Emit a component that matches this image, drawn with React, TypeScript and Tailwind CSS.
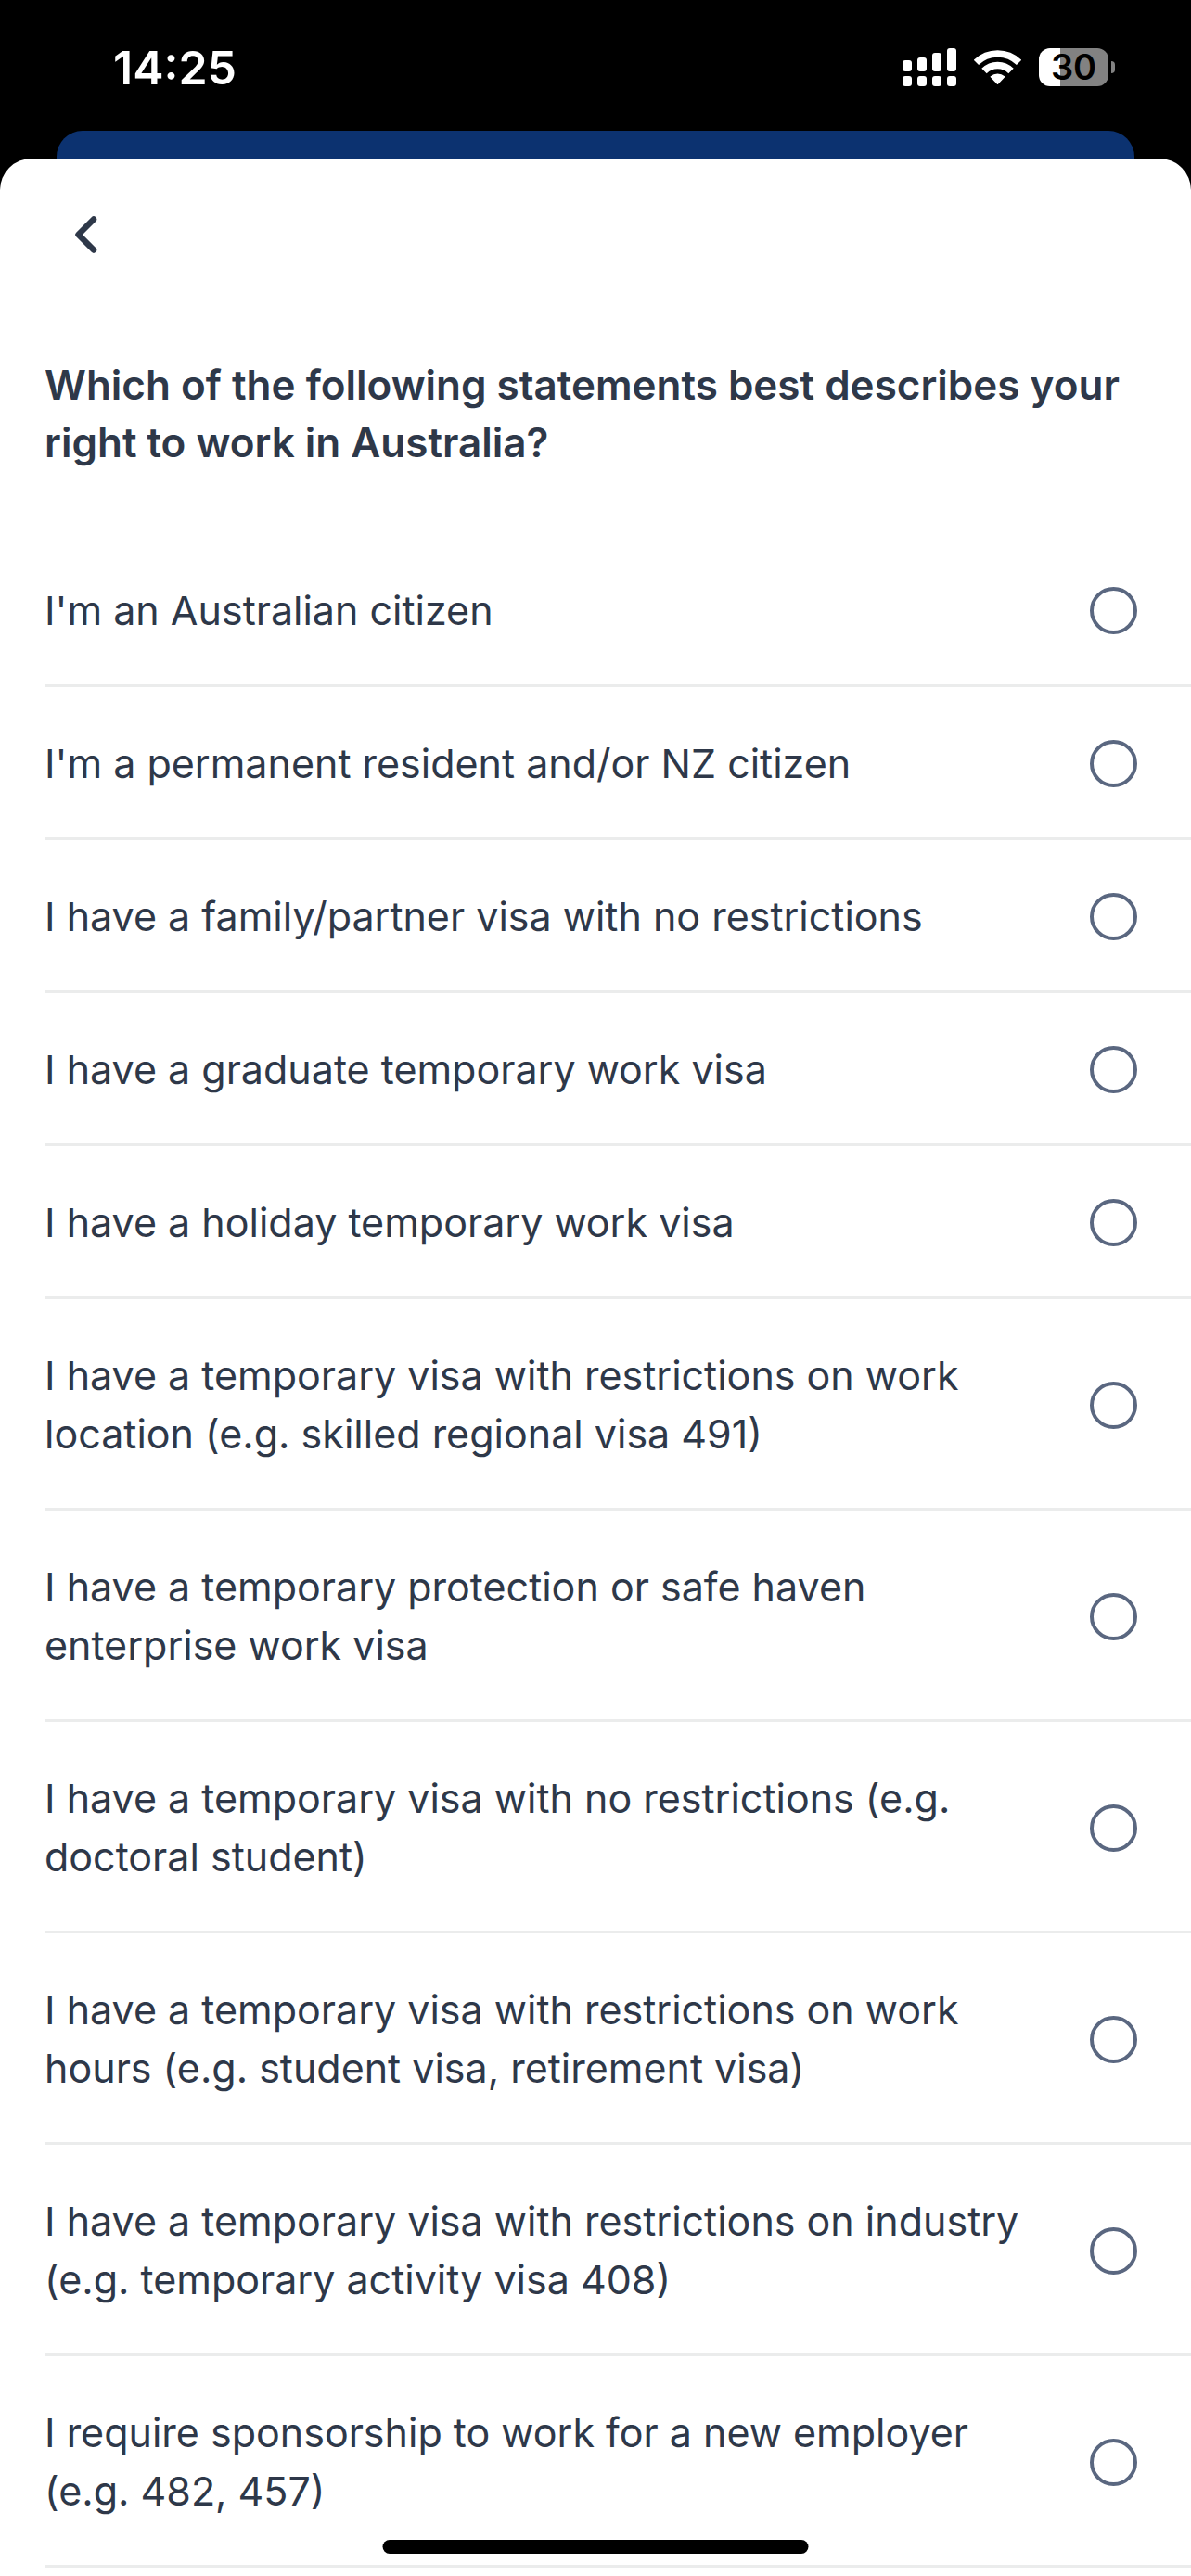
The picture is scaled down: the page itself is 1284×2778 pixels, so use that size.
import { useState } from 'react';

const options = [
  { id: 'citizen', label: "I'm an Australian citizen" },
  { id: 'permanent', label: "I'm a permanent resident and/or NZ citizen" },
  { id: 'family', label: 'I have a family/partner visa with no restrictions' },
  { id: 'graduate', label: 'I have a graduate temporary work visa' },
  { id: 'holiday', label: 'I have a holiday temporary work visa' },
  { id: 'location', label: 'I have a temporary visa with restrictions on work location (e.g. skilled regional visa 491)' },
  { id: 'protection', label: 'I have a temporary protection or safe haven enterprise work visa' },
  { id: 'unrestricted', label: 'I have a temporary visa with no restrictions (e.g. doctoral student)' },
  { id: 'hours', label: 'I have a temporary visa with restrictions on work hours (e.g. student visa, retirement visa)' },
  { id: 'industry', label: 'I have a temporary visa with restrictions on industry (e.g. temporary activity visa 408)' },
  { id: 'sponsorship', label: 'I require sponsorship to work for a new employer (e.g. 482, 457)' },
];

function SignalIcon() {
  return (
    <svg width="58" height="41" viewBox="0 0 58 41" fill="white" aria-hidden="true">
      <rect x="0" y="13" width="10" height="12" rx="3" />
      <rect x="16" y="10" width="10" height="15" rx="3" />
      <rect x="32" y="5" width="10" height="20" rx="3" />
      <rect x="48" y="0" width="10" height="25" rx="3" />
      <rect x="0" y="30" width="10" height="11" rx="3" />
      <rect x="16" y="30" width="10" height="11" rx="3" />
      <rect x="32" y="30" width="10" height="11" rx="3" />
      <rect x="48" y="30" width="10" height="11" rx="3" />
    </svg>
  );
}

function WifiIcon() {
  return (
    <svg width="51" height="41" viewBox="0 0 51 41" fill="none" stroke="white" aria-hidden="true">
      <path d="M2.4 15.4A33 33 0 0 1 48.6 15.4" strokeWidth="7.6" />
      <path d="M11 24.5A20.5 20.5 0 0 1 40 24.5" strokeWidth="7.6" />
      <path
        d="M18.4 30.8A11 11 0 0 1 32.6 30.8L25.5 38.2Z"
        fill="white"
        strokeWidth="1.6"
        strokeLinejoin="round"
      />
    </svg>
  );
}

function Battery() {
  return (
    <div className="flex items-center gap-[3px]">
      <div className="flex h-[41px] w-[75px] items-center justify-center rounded-xl bg-linear-to-r from-white from-31% to-[#828282] to-31% text-[38px] leading-[41px] font-semibold text-black">
        30
      </div>
      <div className="h-[13px] w-1 rounded-r-full bg-[#828282]" />
    </div>
  );
}

function StatusBar() {
  return (
    <div className="flex h-[141px] items-center justify-between pt-1 pr-[82px] pl-[122px] text-white">
      <span className="text-[50px] leading-none font-semibold">14:25</span>
      <div className="flex items-center gap-[19px]">
        <SignalIcon />
        <WifiIcon />
        <Battery />
      </div>
    </div>
  );
}

export default function App() {
  const [selected, setSelected] = useState('');

  return (
    <div className="relative flex min-h-screen flex-col bg-black font-['Inter',sans-serif] text-[#2e3849]">
      <StatusBar />

      {/* card sitting behind the sheet */}
      <div className="mx-[61px] h-[30px] rounded-t-[28px] bg-[#0c3270]" />

      <main className="flex-1 rounded-t-[34px] bg-white pt-[34px]">
        <button type="button" aria-label="Back" className="ml-[45px] flex size-24 items-center justify-center">
          <svg width="24" height="40" viewBox="0 0 24 40" fill="none" stroke="currentColor" strokeWidth="6.5" strokeLinecap="round" strokeLinejoin="round" aria-hidden="true">
            <path d="M20 3.5L3.5 20L20 36.5" />
          </svg>
        </button>

        <h1 id="question" className="mt-[83px] px-12 text-[44px] leading-[62px] font-semibold">
          Which of the following statements best describes your right to work in Australia?
        </h1>

        <div role="radiogroup" aria-labelledby="question" className="mt-[68px] pl-12">
          {options.map((option) => (
            <label
              key={option.id}
              htmlFor={option.id}
              className="flex items-center justify-between gap-12 border-b-3 border-[#ebecec] pt-[51px] pr-[58px] pb-12 text-[43px] leading-[63px]"
            >
              {option.label}
              <input
                type="radio"
                id={option.id}
                name="work-right"
                checked={selected === option.id}
                onChange={() => setSelected(option.id)}
                className="size-[51px] shrink-0 appearance-none rounded-full border-4 border-[#5a6780] checked:border-[16px]"
              />
            </label>
          ))}
        </div>
      </main>

      <div className="absolute bottom-6 left-1/2 h-[15px] w-[459px] -translate-x-1/2 rounded-full bg-black" />
    </div>
  );
}
